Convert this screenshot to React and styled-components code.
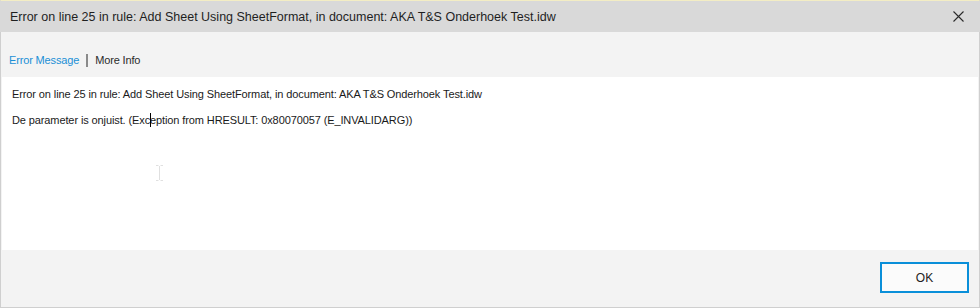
import React from "react";
import styled, { createGlobalStyle } from "styled-components";

const Global = createGlobalStyle`
  html, body { margin: 0; padding: 0; background: #f3f3f3; }
  body { font-family: "Liberation Sans", Arial, sans-serif; }
  * { box-sizing: border-box; }
`;

const Window = styled.div`
  width: 980px;
  height: 308px;
  display: flex;
  flex-direction: column;
  background: #f3f3f3;
  border-top: 1px solid #f3edc4;
  border-left: 1px solid #cfcfcf;
  border-right: 1px solid #cfcfcf;
  border-bottom: 1px solid #cfcfcf;
  position: relative;
`;

const TitleBar = styled.div`
  height: 31px;
  flex: none;
  display: flex;
  align-items: center;
  justify-content: space-between;
  background: #d9d9d9;
  margin-left: -1px;
  margin-right: -1px;
  padding: 0 15px 0 10px;
`;

const Title = styled.span`
  font-family: "Liberation Sans", Arial, sans-serif;
  font-size: 12.5px;
  color: #1f1f1f;
`;

const CloseButton = styled.button`
  width: 14px;
  height: 14px;
  padding: 0;
  border: none;
  background: transparent;
  display: flex;
  align-items: center;
  justify-content: center;
`;

const Tabs = styled.div`
  height: 45px;
  flex: none;
  display: flex;
  align-items: center;
  padding: 11px 0 0 8px;
  font-size: 11px;
  letter-spacing: -0.15px;
`;

const Tab = styled.span`
  color: ${(p) => (p.$active ? "#1a8fd6" : "#2b2b2b")};
`;

const Sep = styled.span`
  width: 2px;
  height: 13px;
  background: #8a8a8a;
  margin: 0 7px 0 7px;
`;

const Content = styled.div`
  height: 173px;
  flex: none;
  margin: 0 1px 0 1px;
  background: #ffffff;
  padding: 9px 10px;
  position: relative;
  font-size: 11px;
  letter-spacing: -0.11px;
  color: #1a1a1a;
`;

const Line = styled.div`
  height: 16px;
  line-height: 16px;
  margin-bottom: 10px;
`;

const Caret = styled.span`
  display: inline-block;
  position: relative;
  width: 0;
  height: 0;
  &::before {
    content: "";
    position: absolute;
    left: 0;
    top: -11px;
    width: 1px;
    height: 14px;
    background: #000;
  }
`;

const Cursor = styled.svg`
  position: absolute;
  left: 153px;
  top: 88px;
`;

const Footer = styled.div`
  flex: 1;
  display: flex;
  align-items: center;
  justify-content: flex-end;
  padding: 0 10px 2px 0;
`;

const Button = styled.button`
  width: 89px;
  height: 31px;
  border: 2px solid #0a8fd9;
  background: #fbfbfb;
  font-family: "Liberation Sans", Arial, sans-serif;
  font-size: 12px;
  color: #222;
  padding: 0;
`;

export default function App() {
  return (
    <>
      <Global />
      <Window>
        <TitleBar>
          <Title>Error on line 25 in rule: Add Sheet Using SheetFormat, in document: AKA T&amp;S Onderhoek Test.idw</Title>
          <CloseButton aria-label="Close">
            <svg width="11" height="11" viewBox="0 0 11 11">
              <path d="M0.5 0.5 L10.5 10.5 M10.5 0.5 L0.5 10.5" stroke="#2a2a2a" strokeWidth="1.1" />
            </svg>
          </CloseButton>
        </TitleBar>
        <Tabs>
          <Tab $active>Error Message</Tab>
          <Sep />
          <Tab>More Info</Tab>
        </Tabs>
        <Content>
          <Line>Error on line 25 in rule: Add Sheet Using SheetFormat, in document: AKA T&amp;S Onderhoek Test.idw</Line>
          <Line>
            De parameter is onjuist. (Exc<Caret />eption from HRESULT: 0x80070057 (E_INVALIDARG))
          </Line>
          <Cursor width="9" height="16" viewBox="0 0 9 16">
            <path d="M1 0.5 H3.5 M5.5 0.5 H8 M4.5 1 V15 M1 15.5 H3.5 M5.5 15.5 H8" stroke="#e0e0e0" strokeWidth="1" fill="none" />
          </Cursor>
        </Content>
        <Footer>
          <Button>OK</Button>
        </Footer>
      </Window>
    </>
  );
}
